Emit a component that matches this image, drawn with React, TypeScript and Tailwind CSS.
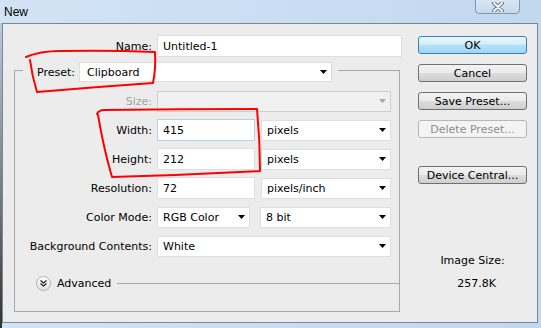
import React from "react";

const F = { fontFamily: '"DejaVu Sans", Verdana, sans-serif' };

function Caret({ disabled = false }: { disabled?: boolean }) {
  return (
    <svg width="7" height="4" viewBox="0 0 7 4" className="shrink-0">
      <path d="M0 0 H7 L3.5 4 Z" fill={disabled ? "#a8a8a8" : "#000"} />
    </svg>
  );
}

function Select({ value, w, pl = "pl-[5px]", disabled = false }: { value: string; w: string; pl?: string; disabled?: boolean }) {
  return (
    <div
      className={`${w} h-[21px] flex items-center justify-between ${pl} pr-[4px] border ${
        disabled ? "bg-[#f0f0f0] border-[#cfcfcf]" : "bg-white border-[#dedede]"
      }`}
    >
      <span className="text-[11px] text-black leading-none">{value}</span>
      <Caret disabled={disabled} />
    </div>
  );
}

function Input({ value, w, focus = false }: { value: string; w: string; focus?: boolean }) {
  return (
    <div
      className={`${w} h-[22px] flex items-center pl-[5px] bg-white border ${
        focus ? "border-[#b4d0e8]" : "border-[#dedede]"
      }`}
    >
      <span className="text-[11px] text-black leading-none">{value}</span>
    </div>
  );
}

function Row({ label, children, disabled = false }: { label: string; children: React.ReactNode; disabled?: boolean }) {
  return (
    <div className="flex items-center h-[22px]">
      <div className={`w-[137px] text-right text-[11px] leading-none ${disabled ? "text-[#a3a3a3]" : "text-black"}`}>{label}</div>
      <div className="ml-[5px] flex items-center gap-[6px]">{children}</div>
    </div>
  );
}

function Btn({ label, kind = "normal" }: { label: string; kind?: "normal" | "default" | "disabled" }) {
  const cls =
    kind === "default"
      ? "border-[#3c7fb1] bg-[linear-gradient(#e8f6fd,#d3eefb_45%,#b6e1f8_50%,#9fd6f5)] text-black"
      : kind === "disabled"
      ? "border-[#b5b8bb] bg-[#f4f4f4] text-[#8d8d8d]"
      : "border-[#707070] bg-[linear-gradient(#f2f2f2,#ebebeb_50%,#dddddd_50%,#cfcfcf)] text-black";
  return (
    <div className={`w-[109px] h-[18px] rounded-[3px] border flex items-center justify-center text-[11px] leading-none ${cls}`}>
      {label}
    </div>
  );
}

export default function App() {
  return (
    <div className="relative w-[541px] h-[328px] overflow-hidden bg-[linear-gradient(90deg,#d2e3f5,#c2d8ef)]" style={F}>
      {/* title bar */}
      <div className="h-[23px] flex items-start justify-between pl-[4px]">
        <span className="mt-[3px] text-[12px] text-black" style={{ fontFamily: '"Liberation Sans", Arial, sans-serif' }}>
          New
        </span>
        <div className="mr-[21px] w-[45px] h-[15px] -mt-px rounded-b-[4px] border border-[#8596a8] bg-[linear-gradient(#d9e6f4,#c6d9ee)] flex items-center justify-center">
          <svg width="14" height="10" viewBox="0 0 14 10">
            <path d="M3 1 L11 9 M11 1 L3 9" stroke="#6b7a8a" strokeWidth="4" strokeLinecap="round" />
            <path d="M3 1 L11 9 M11 1 L3 9" stroke="#f4f7fa" strokeWidth="2" strokeLinecap="round" />
          </svg>
        </div>
      </div>

      {/* body */}
      <div className="flex h-[305px]">
        <div className="w-[2px] h-full bg-[linear-gradient(#b9cadb,#6d7780_60%,#2f332f)]" />
        <div className="w-[536px] h-[300px] border border-[#7b8794] bg-[#ececec] flex">
          {/* left part */}
          <div className="w-[415px] pt-[11px] flex flex-col">
            {/* Name */}
            <div className="flex items-center h-[22px]">
              <div className="w-[149px] text-right text-[11px] leading-none text-black">Name:</div>
              <div className="ml-[5px]">
                <Input value="Untitled-1" w="w-[245px]" />
              </div>
            </div>

            <fieldset className="ml-[11px] mt-px w-[386px] h-[254px] border border-[#a8a8a8]">
              <legend className="ml-[8px] pt-[4px] pl-[14px] pr-[6px]">
                <div className="flex items-center h-[20px] gap-[4px]">
                  <span className="text-[11px] leading-none text-black">Preset:</span>
                  <Select value="Clipboard" w="w-[253px] !h-[20px]" pl="pl-[7px]" />
                </div>
              </legend>

              <div className="flex flex-col gap-[7px] mt-[8px]">
                <Row label="Size:" disabled>
                  <Select value="" w="w-[234px]" disabled />
                </Row>
                <Row label="Width:">
                  <Input value="415" w="w-[98px]" focus />
                  <Select value="pixels" w="w-[130px]" />
                </Row>
                <Row label="Height:">
                  <Input value="212" w="w-[98px]" />
                  <Select value="pixels" w="w-[130px]" />
                </Row>
                <Row label="Resolution:">
                  <Input value="72" w="w-[98px]" />
                  <Select value="pixels/inch" w="w-[130px]" />
                </Row>
                <Row label="Color Mode:">
                  <Select value="RGB Color" w="w-[93px]" />
                  <Select value="8 bit" w="w-[131px] ml-[4px]" />
                </Row>
                <Row label="Background Contents:">
                  <Select value="White" w="w-[234px]" />
                </Row>
              </div>

              <div className="flex items-center h-[16px] mt-[18px] ml-[21px]">
                <div className="w-[15px] h-[15px] rounded-full border border-[#b0b0b0] bg-[linear-gradient(#ffffff,#e2e2e2)] flex items-center justify-center">
                  <svg width="7" height="7" viewBox="0 0 7 7">
                    <path d="M0.5 0.5 L3.5 3 L6.5 0.5 M0.5 3.5 L3.5 6 L6.5 3.5" stroke="#222" strokeWidth="1.3" fill="none" />
                  </svg>
                </div>
                <span className="ml-[6px] text-[11px] leading-none text-black">Advanced</span>
                <div className="ml-[6px] w-[282px] h-px bg-[#a8a8a8]" />
              </div>
            </fieldset>
          </div>

          {/* right part */}
          <div className="w-[109px] pt-[12px] flex flex-col">
            <div className="flex flex-col gap-[10px]">
              <Btn label="OK" kind="default" />
              <Btn label="Cancel" />
              <Btn label="Save Preset..." />
              <Btn label="Delete Preset..." kind="disabled" />
            </div>
            <div className="mt-[28px]">
              <Btn label="Device Central..." />
            </div>
            <div className="mt-[70px] text-center text-[11px] leading-[14px] text-black">Image Size:</div>
            <div className="mt-[9px] pl-[8px] text-center text-[11px] leading-[14px] text-black">257.8K</div>
          </div>
        </div>
      </div>

      {/* red hand-drawn annotations */}
      <svg className="absolute left-0 top-0 pointer-events-none" width="541" height="328" viewBox="0 0 541 328">
        <path
          d="M26 57 Q 40 51 60 51 Q 110 50 155 52 Q 156 68 153 83 Q 95 87 37 92 Q 32 76 30 60"
          stroke="#f00"
          strokeWidth="2"
          fill="none"
          strokeLinecap="round"
          strokeLinejoin="round"
        />
        <path
          d="M97 114 Q 99 110 104 110 Q 180 109 257 109 Q 260 140 260 171 Q 185 175 112 177 Q 104 150 98 115"
          stroke="#f00"
          strokeWidth="2"
          fill="none"
          strokeLinecap="round"
          strokeLinejoin="round"
        />
      </svg>
    </div>
  );
}
